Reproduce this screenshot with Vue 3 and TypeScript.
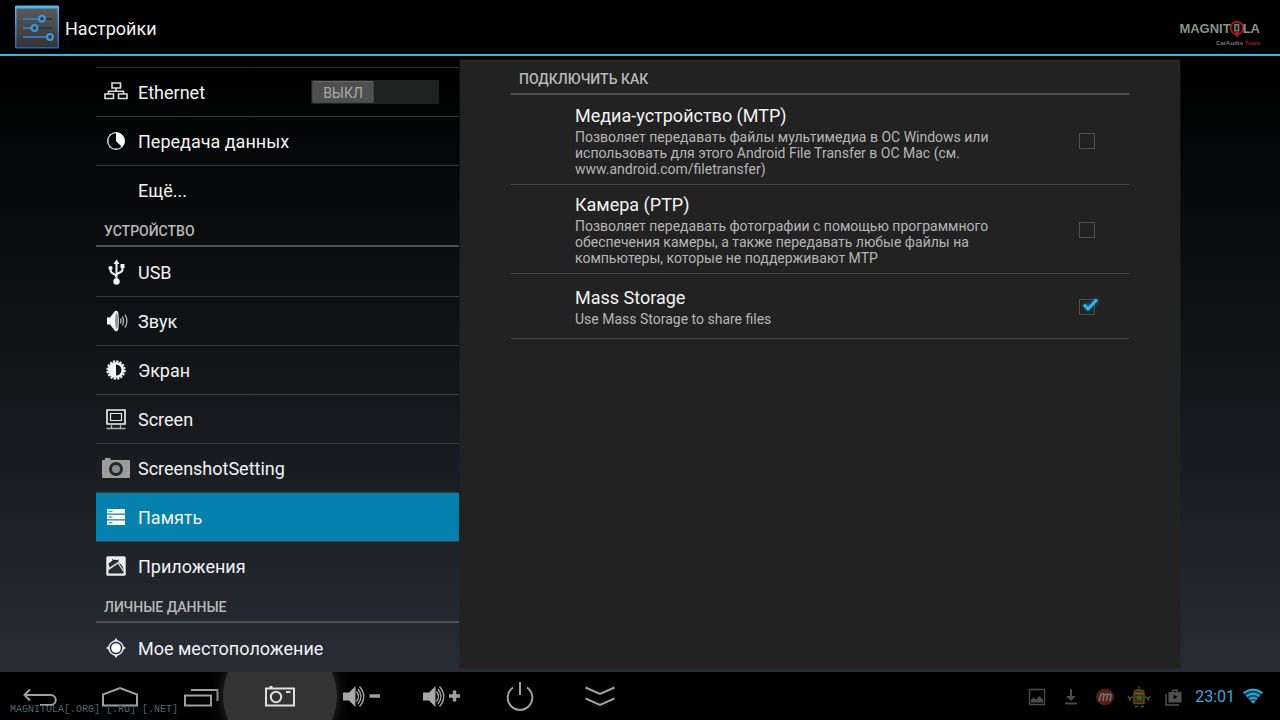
<script setup lang="ts">
import { ref } from 'vue'

interface Item { id: string; label: string; toggle?: boolean }
interface Group { title?: string; items: Item[] }
interface Mode { id: string; title: string; summary: string; checked: boolean }

const groups: Group[] = [
  {
    items: [
      { id: 'ethernet', label: 'Ethernet', toggle: true },
      { id: 'data', label: 'Передача данных' },
      { id: 'more', label: 'Ещё...' },
    ],
  },
  {
    title: 'УСТРОЙСТВО',
    items: [
      { id: 'usb', label: 'USB' },
      { id: 'sound', label: 'Звук' },
      { id: 'display', label: 'Экран' },
      { id: 'screen', label: 'Screen' },
      { id: 'screenshot', label: 'ScreenshotSetting' },
      { id: 'storage', label: 'Память' },
      { id: 'apps', label: 'Приложения' },
    ],
  },
  { title: 'ЛИЧНЫЕ ДАННЫЕ', items: [{ id: 'location', label: 'Мое местоположение' }] },
]

const selected = ref('storage')
const ethernetOn = ref(false)

const modes = ref<Mode[]>([
  {
    id: 'mtp',
    title: 'Медиа-устройство (MTP)',
    summary: 'Позволяет передавать файлы мультимедиа в ОС Windows или использовать для этого Android File Transfer в ОС Mac (см. www.android.com/filetransfer)',
    checked: false,
  },
  {
    id: 'ptp',
    title: 'Камера (PTP)',
    summary: 'Позволяет передавать фотографии с помощью программного обеспечения камеры, а также передавать любые файлы на компьютеры, которые не поддерживают MTP',
    checked: false,
  },
  { id: 'ums', title: 'Mass Storage', summary: 'Use Mass Storage to share files', checked: true },
])
</script>

<template>
  <div class="device">
    <header class="bar">
      <svg class="app-icon" viewBox="0 0 44 44" aria-hidden="true">
        <defs>
          <linearGradient id="plate" x1="0" y1="0" x2="0" y2="1">
            <stop offset="0" stop-color="#5a5a5a" /><stop offset="1" stop-color="#343434" />
          </linearGradient>
          <linearGradient id="rim" x1="0" y1="0" x2="0" y2="1">
            <stop offset="0" stop-color="#4dbdf3" /><stop offset="1" stop-color="#2462b4" />
          </linearGradient>
        </defs>
        <rect width="44" height="43" rx="1" y=".5" fill="url(#rim)" />
        <rect x="1.5" y="3.5" width="41" height="38.5" fill="url(#plate)" />
        <path d="M8 14h29M8 23h29M8 32h29" stroke="#1c3556" stroke-width="1.6" />
        <path d="M8 14h16M8 23h9M8 32h25" stroke="#3d8fd8" stroke-width="1.6" />
        <g fill="#414141" stroke="#3d98e2" stroke-width="2">
          <circle cx="27" cy="13.7" r="2.9" /><circle cx="19.5" cy="23" r="2.9" /><circle cx="35" cy="32" r="2.9" />
        </g>
      </svg>
      <h1>Настройки</h1>
      <div class="brand">
        <div class="brand-name">
          <span>MAGNIT</span>
          <svg viewBox="0 0 16 18" aria-hidden="true">
            <circle cx="8" cy="8" r="6.3" fill="#160808" stroke="#8f1a20" stroke-width="2" />
            <path d="M6 4.8h3.5v6H6z" fill="none" stroke="#76857b" stroke-width="1.5" />
            <path d="M6.5 12.5 8 9.5l1.8 3-.6 4.5H7z" fill="#a81f26" />
          </svg>
          <span>LA</span>
        </div>
        <div class="brand-sub">CarAudio <b>Team</b></div>
      </div>
    </header>

    <main>
      <nav class="sidebar" aria-label="Настройки">
        <section v-for="(g, i) in groups" :key="i">
          <h2 v-if="g.title">{{ g.title }}</h2>
          <ul>
            <li v-for="item in g.items" :key="item.id" :class="{ selected: selected === item.id }">
              <button class="entry" type="button" @click="selected = item.id">
                <span class="glyph">
                  <svg v-if="item.id === 'ethernet'" width="24" height="24" viewBox="0 0 24 24" fill="none" stroke="#dcdcdc" stroke-width="1.6">
                    <path d="M8 3h8.500v5H8zM12 8v3M4.500 14v-2.800h15V14M1 14h8.500v4.500H1zM14.500 14H23v4.500h-8.500z" />
                  </svg>
                  <svg v-else-if="item.id === 'data'" width="24" height="24" viewBox="0 0 24 24">
                    <circle cx="12" cy="12" r="8.300" fill="none" stroke="#d8d8d8" stroke-width="1.300" />
                    <path d="M12 3.500A8.500 8.500 0 0 1 18 18l-6-6z" fill="#fff" />
                    <path d="M3 12h2M12 19v2M5.500 5.500l1 1M5.500 18.500l1-1" stroke="#d8d8d8" stroke-width="1" />
                  </svg>
                  <svg v-else-if="item.id === 'usb'" width="24" height="28" viewBox="0 0 24 28">
                    <path d="M12.500 22V5M12.500 19c0-3.500-6-2.500-6-7V9.500M12.500 17.500c0-3.500 6-2 6-6V8" fill="none" stroke="#f2f2f2" stroke-width="2" />
                    <path d="m12.500 1.500 3 4.500h-6z" fill="#f2f2f2" />
                    <circle cx="12.500" cy="23.500" r="3.200" fill="#f2f2f2" />
                    <circle cx="6.500" cy="10" r="2.100" fill="#f2f2f2" /><path d="M16.500 6h4v4h-4z" fill="#f2f2f2" />
                  </svg>
                  <svg v-else-if="item.id === 'sound'" width="24" height="24" viewBox="0 0 24 24">
                    <path d="M3 8.500h3l5-6.500c1.500-.8 3 0 3.300 2 .7 5 .7 11 0 16-.3 2-1.800 2.800-3.300 2l-5-6.500H3z" fill="#f5f5f5" />
                    <ellipse cx="12.600" cy="12" rx="1.500" ry="8" fill="#8f9293" />
                    <path d="M16.300 9.500c.9 1.500.9 3.500 0 5M18.300 7.500c1.500 2.800 1.500 6.200 0 9M21 5.500c2.300 4 2.300 9 0 13" fill="none" stroke="#bbb" stroke-width="1.300" />
                  </svg>
                  <svg v-else-if="item.id === 'display'" width="24" height="24" viewBox="0 0 24 24">
                    <circle cx="12" cy="12" r="8.700" fill="none" stroke="#f5f5f5" stroke-width="2" stroke-dasharray="2.200 1.217" />
                    <circle cx="12" cy="12" r="6.800" fill="#15181a" stroke="#f5f5f5" stroke-width="2.600" />
                    <path d="M12 5a7 7 0 0 0 0 14z" fill="#f5f5f5" />
                  </svg>
                  <svg v-else-if="item.id === 'screen'" width="24" height="24" viewBox="0 0 24 24" fill="none">
                    <path d="M3 3h18v14H3z" stroke="#f4f4f4" stroke-width="1.600" />
                    <path d="M6.500 6.500h11v7h-11z" stroke="#e8e8e8" stroke-width="1.200" />
                    <path d="M7.500 17.500v3.500M16.500 17.500v3.500M2.500 21.500h19" stroke="#a6b1a9" stroke-width="1.300" />
                  </svg>
                  <svg v-else-if="item.id === 'screenshot'" width="28" height="22" viewBox="0 0 28 22">
                    <path d="M1 3h2V1h5.500v2H27q1 0 1 1V20q0 1-1 1H1q-1 0-1-1V4q0-1 1-1z" fill="#9d9b9c" />
                    <circle cx="14" cy="12" r="5.500" fill="#8b8d8d" stroke="#22272b" stroke-width="3" />
                  </svg>
                  <svg v-else-if="item.id === 'storage'" width="24" height="24" viewBox="0 0 24 24">
                    <path d="M3 4h18v4.500H3zM3 9.800h18v4.500H3zM3 15.600h18v4.500H3z" fill="#fff" />
                    <path d="M4.500 6.200h4M4.500 12h4M4.500 17.800h4" stroke="#0681ad" stroke-width="1" />
                  </svg>
                  <svg v-else-if="item.id === 'apps'" width="24" height="24" viewBox="0 0 24 24">
                    <rect x="2.300" y="2.300" width="19.400" height="19.400" rx="1.500" fill="#eee" />
                    <path d="M4.500 19.500V15l5-3.500 3.500-3c4 .5 6.500 4 6.500 8v3z" fill="#252b2f" />
                    <path d="m4.500 9.500 4-3-.8-2 2 1.500c1.500-.5 3-.3 4 .3l1.300-1.300-.5 2.500-9 6z" fill="#252b2f" />
                    <path d="M4.500 15.500 14 9l5.500 8" stroke="#eee" stroke-width="1.200" fill="none" />
                  </svg>
                  <svg v-else-if="item.id === 'location'" width="24" height="24" viewBox="0 0 24 24">
                    <circle cx="12" cy="12" r="7" fill="none" stroke="#dedede" stroke-width="1.600" />
                    <circle cx="12" cy="12" r="4.800" fill="#fff" />
                    <path d="m12 2 2 3h-4zM12 22l2-3h-4zM2 12l3-2v4zM22 12l-3-2v4z" fill="#eee" />
                  </svg>
                </span>
                <span class="label">{{ item.label }}</span>
              </button>
              <button v-if="item.toggle" class="switch" :class="{ on: ethernetOn }" type="button" role="switch" :aria-checked="ethernetOn" aria-label="Ethernet" @click="ethernetOn = !ethernetOn">
                <span class="thumb">{{ ethernetOn ? 'ВКЛ' : 'ВЫКЛ' }}</span>
              </button>
            </li>
          </ul>
        </section>
      </nav>

      <section class="panel">
        <h2>ПОДКЛЮЧИТЬ КАК</h2>
        <label v-for="m in modes" :key="m.id" class="mode" :for="m.id">
          <span class="text">
            <span class="title">{{ m.title }}</span>
            <span class="summary">{{ m.summary }}</span>
          </span>
          <span class="check">
            <input :id="m.id" v-model="m.checked" type="checkbox" />
            <svg v-if="m.checked" viewBox="0 0 24 24" aria-hidden="true"><path d="m7 10.500 4 4.500 9-9.500" /></svg>
          </span>
        </label>
      </section>
    </main>

    <footer>
      <div class="keys">
        <button type="button" aria-label="Назад">
          <svg width="48" height="32" viewBox="0 -4 48 32"><path d="M14 5.500 8.500 11l5.500 5.500M8.500 11h26c7 0 7 10 0 10H24" /></svg>
        </button>
        <button type="button" aria-label="Домой">
          <svg width="48" height="32" viewBox="0 -4 48 32"><path d="M7 21.500V10.500L24 4l17 6.500v11z" /></svg>
        </button>
        <button type="button" aria-label="Недавние">
          <svg width="48" height="32" viewBox="0 -4 48 32"><path d="M9 11.500h26v10H9zM15 6h26.500v11" /></svg>
        </button>
        <button class="pressed" type="button" aria-label="Снимок экрана">
          <svg width="48" height="32" viewBox="0 -4 48 32"><path d="M10 4.500h28v17H10zM13.500 3h3" /><circle cx="20" cy="13" r="5.200" /><path d="M30 8h4.500" /></svg>
        </button>
        <button type="button" aria-label="Тише">
          <svg width="48" height="32" viewBox="0 -4 48 32"><path class="solid" d="M7 8.500h6L19.500 2v21L13 16.500H7z" /><path class="wave" d="M20.500 7.500q4 5 0 10M22 5q6 7.500 0 15M23.500 2.500q8.500 10 0 20" /><path class="bold" d="M33.500 12H44" /></svg>
        </button>
        <button type="button" aria-label="Громче">
          <svg width="48" height="32" viewBox="0 -4 48 32"><path class="solid" d="M7 8.500h6L19.500 2v21L13 16.500H7z" /><path class="wave" d="M20.500 7.500q4 5 0 10M22 5q6 7.500 0 15M23.500 2.500q8.500 10 0 20" /><path class="bold" d="M33 12h11M38.500 6.500v11" /></svg>
        </button>
        <button type="button" aria-label="Питание">
          <svg width="48" height="32" viewBox="0 -4 48 32"><path d="M17 3.500a12.300 12.300 0 1 0 14 0M24-2v13" /></svg>
        </button>
        <button type="button" aria-label="Скрыть">
          <svg width="48" height="32" viewBox="0 -4 48 32"><path d="m9.500 3.500 14.500 6.500 14.500-6.500M9.500 14.500 24 21l14.500-6.500" /></svg>
        </button>
      </div>
      <p class="watermark">MAGNITOLA[.ORG] [.RU] [.NET]</p>
      <div class="status">
        <svg viewBox="0 0 24 24"><path d="M4.500 4.500h15v15h-15z" fill="none" stroke="#4b4b4b" stroke-width="1.400" /><path d="M6 17.500v-3l2.500-2 2.500 2 3.500-3.500 3.500 3.500v3z" fill="#4b4b4b" /></svg>
        <svg viewBox="0 0 24 24"><path d="M11 4h2v7h4l-5 5-5-5h4zM6 17.500h12v2H6z" fill="#4b4b4b" /></svg>
        <svg viewBox="0 0 24 24"><ellipse cx="12" cy="12" rx="9" ry="8.200" fill="#5c1b12" /><path d="m6 16 2-6.500q3-2 3 1L9.800 16M11 10.500q4-3 3.500 0L13.200 16M14.500 10.500q4-3 3.500.5l-1 5" fill="none" stroke="#66757a" stroke-width="1.600" /></svg>
        <svg viewBox="0 0 24 24"><path d="M7 18.500V8q0-3 5-3t5 3v10.500z" fill="#362c17" stroke="#684716" stroke-width="1.500" /><path d="M12 5V1" stroke="#6e2d22" stroke-width="1.500" /><path d="M8 8.500h8" stroke="#71622e" stroke-width="1.500" /><circle cx="12.300" cy="13" r="2.800" fill="#3b551f" /><path d="M6 12c-2 0-2 2-4 2M18 12c2 0 2 2 4 2M1 11l2 3-1 2M23 11l-2 3 1 2M8 21.500h3M14 21.500h3" stroke="#435923" stroke-width="1.400" fill="none" /></svg>
        <svg viewBox="0 0 24 24"><path d="M7.500 7H11V5.500q0-1 1-1h4q1 0 1 1V7h3.500v10.500h-13zM12.500 6v1h3V6zM12.500 9.500v5l4-2.500z" fill="#505050" fill-rule="evenodd" /><path d="M5 9v11h13" fill="none" stroke="#505050" stroke-width="1.500" /></svg>
        <time>23:01</time>
        <svg class="wifi" viewBox="0 0 24 24"><path d="M2 7.500q10-7 20 0L12 19z" fill="#154a60" /><path d="M2.500 8q9.500-7 19 0M5.500 11.200q6.500-5 13 0M8.300 14.200q3.700-3 7.400 0" fill="none" stroke="#31a9d8" stroke-width="2" /><path d="M9.800 16q2.200-1.500 4.400 0L12 18.800z" fill="#31a9d8" /></svg>
      </div>
    </footer>
  </div>
</template>

<style>
body { margin: 0; background: #000; }
</style>

<style scoped>
* { box-sizing: border-box; }
.device {
  height: 100vh;
  display: flex;
  flex-direction: column;
  overflow: hidden;
  color: #f3f3f3;
  font: 18px/22px Roboto, "Noto Sans", sans-serif;
  background: linear-gradient(#000 0, #000 56px, #14181b 55%, #282d37 94%);
}
h1, h2, p, ul { margin: 0; padding: 0; font: inherit; }
ul { list-style: none; }
button { padding: 0; border: 0; background: none; color: inherit; font: inherit; cursor: pointer; }
svg { display: block; flex: none; }

.bar {
  flex: none;
  display: flex;
  align-items: center;
  gap: 6px;
  height: 56px;
  padding: 0 20px 0 15px;
  border-bottom: 2px solid #33b5e5;
  background: #000;
}
.app-icon { width: 44px; height: 44px; }
h1 { padding-top: 4px; }
.brand { margin-left: auto; padding-top: 12px; text-align: right; font-family: "Liberation Sans Narrow", "Liberation Sans", sans-serif; font-weight: bold; }
.brand-name { display: flex; align-items: center; justify-content: flex-end; font-size: 13px; line-height: 20px; color: #83958a; }
.brand-name svg { width: 16px; height: 18px; margin: 0 -2px; }
.brand-sub { font: bold 6px/8px "Liberation Sans", sans-serif; color: #777; }
.brand-sub b { color: #a31d24; }

main { flex: 1; min-height: 0; display: grid; grid-template-columns: 363fr 720fr; column-gap: 1px; padding: 0 100px 0 96px; }
.sidebar { min-width: 0; overflow: hidden; padding-top: 11px; }
section:first-child > ul { border-top: 1px solid #303234; }
h2 {
  height: 32px;
  margin-bottom: 1px;
  padding-left: 8px;
  border-bottom: 2px solid #4d4f51;
  color: #b8b8b8;
  font-size: 14px;
  line-height: 32px;
  font-weight: 500;
}
li { display: flex; align-items: center; height: 49px; border-bottom: 1px solid #3a3d40; }
li:last-child { border-bottom-color: transparent; }
li.selected { background: #0681ad; }
.entry { flex: 1; display: flex; align-items: center; gap: 6px; height: 100%; padding-left: 4px; text-align: left; }
.glyph { width: 32px; display: flex; justify-content: center; }
.label { padding-top: 2px; }
.switch { width: 128px; height: 24px; margin-right: 20px; padding: 1px; background: #202221; display: flex; }
.switch.on { justify-content: flex-end; }
.thumb { width: 62px; height: 22px; border: 1px solid #484848; border-top-color: #686868; border-radius: 2px; background: #4f4f4f; color: #a9a9a9; font-size: 14px; line-height: 22px; }

.panel { min-width: 0; margin: 4px 0; padding: 2px 51px 0; background: #222; border-top: 1px solid #2a2a2a; box-shadow: 0 0 2px #222; }
.mode { display: flex; align-items: center; min-height: 65px; padding: 9px 34px 7px 64px; border-bottom: 1px solid #444; }
.text { flex: 1; min-width: 0; padding-right: 60px; }
.title, .summary { display: block; }
.title { margin-bottom: 2px; }
.summary { font-size: 14px; line-height: 16px; color: #b6b6b6; }
.check { position: relative; width: 16px; height: 16px; }
.check input { appearance: none; display: block; width: 16px; height: 16px; margin: 0; border: 1px solid #505050; }
.check svg { position: absolute; top: -5px; left: -2px; width: 24px; height: 24px; pointer-events: none; filter: drop-shadow(0 0 2px #167fae); }
.check path { fill: none; stroke: #36b4e6; stroke-width: 3; }

footer { position: relative; flex: none; height: 48px; display: flex; justify-content: space-between; background: #000; overflow: hidden; }
.keys { display: flex; }
.keys button { position: relative; width: 80px; height: 48px; display: flex; align-items: center; justify-content: center; }
.keys svg { position: relative; overflow: visible; fill: none; stroke: #a0a0a0; stroke-width: 2; }
.keys .solid { fill: #a8a8a8; stroke: none; }
.keys .wave { stroke-width: 1.5; }
.keys .bold { stroke-width: 3.5; }
.pressed::before { content: ""; position: absolute; left: -17px; top: -33px; width: 114px; height: 114px; border-radius: 50%; background: #333; box-shadow: 0 0 14px #333; }
.keys .pressed svg { stroke: #dedede; }
.watermark { position: absolute; left: 10px; bottom: 4px; color: #4b6a73; font: 10px/12px "Liberation Mono", monospace; }
.status { display: flex; align-items: center; gap: 10px; padding: 2px 15px 0 0; }
.status svg { width: 24px; height: 24px; }
time { color: #31acdc; font-size: 16px; }
.status .wifi { margin-left: -4px; }
</style>
